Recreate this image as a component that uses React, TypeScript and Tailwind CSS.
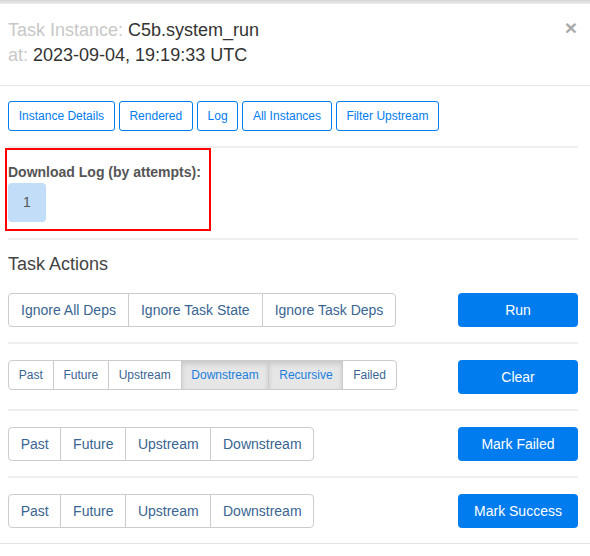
import React from 'react';

const navButtons = ['Instance Details', 'Rendered', 'Log', 'All Instances', 'Filter Upstream'];

type Seg = { label: string; active?: boolean };

const ButtonGroup = ({ items, small, tight }: { items: Seg[]; small?: boolean; tight?: boolean }) => (
  <div className="flex">
    {items.map((item, i) => (
      <button
        key={item.label}
        className={[
          'border border-[#cccccc]',
          small
            ? 'px-[9.8px] py-[5px] text-[12px] leading-[18px]'
            : tight
              ? 'px-[11.7px] py-[6px] text-[14px] leading-[20px]'
              : 'px-[12px] py-[6px] text-[14px] leading-[20px]',
          i > 0 ? '-ml-px' : '',
          i === 0 ? 'rounded-l-[4px]' : '',
          i === items.length - 1 ? 'rounded-r-[4px]' : '',
          item.active
            ? 'bg-[#e6e6e6] border-[#adadad] text-[#1a7fe0] shadow-[inset_0_3px_5px_rgba(0,0,0,0.125)] relative z-10'
            : 'bg-white text-[#396592]',
        ].join(' ')}
      >
        {item.label}
      </button>
    ))}
  </div>
);

const ActionButton = ({ label }: { label: string }) => (
  <button className="w-[120px] h-[34px] rounded-[4px] bg-[#017cee] text-white text-[14px] leading-[20px]">
    {label}
  </button>
);

const Hr = () => <div className="h-[2px] bg-[#eeeeee]" />;

const directions = [{ label: 'Past' }, { label: 'Future' }, { label: 'Upstream' }, { label: 'Downstream' }];

export default function App() {
  return (
    <div className="w-[590px] h-[556px] bg-white overflow-hidden" style={{ fontFamily: '"Liberation Sans", Arial, sans-serif' }}>
      {/* top strip */}
      <div className="h-[4px] bg-gradient-to-b from-[#d6d6d6] to-[#ececec]" />

      {/* Header */}
      <div className="flex justify-between pl-2 pr-[13px] pt-[14px] pb-[17px] border-b border-[#e5e5e5]">
        <div className="text-[18px] leading-[25px]">
          <div>
            <span className="text-[#c8c8c8]">Task Instance: </span>
            <span className="text-[#333333]">C5b.system_run</span>
          </div>
          <div>
            <span className="text-[#c8c8c8]">at: </span>
            <span className="text-[#333333]">2023-09-04, 19:19:33 UTC</span>
          </div>
        </div>
        <button className="text-[21px] font-bold leading-none text-[#aaaaaa] h-[20px] -mt-px">×</button>
      </div>

      {/* Body */}
      <div className="pl-2 pr-3 pb-[15px]">
        <div className="flex gap-[4px] mt-[15px]">
          {navButtons.map((b) => (
            <button
              key={b}
              className="h-[30px] px-[9.7px] border border-[#017cee] rounded-[3px] text-[12px] text-[#017cee] bg-white"
            >
              {b}
            </button>
          ))}
        </div>

        <div className="mt-[15px]">
          <Hr />
        </div>

        <div className="-ml-[3px] w-[206px] h-[83px] border-2 border-[#ff0000] pl-px pt-[12px]">
          <div className="text-[14px] leading-[20px] font-bold text-[#555555]">Download Log (by attempts):</div>
          <button className="mt-px w-[38px] h-[39px] rounded-[4px] bg-[#c2ddf8] text-[14px] text-[#555555]">1</button>
        </div>

        <div className="mt-[7px]">
          <Hr />
        </div>

        <div className="mt-[12px] text-[18px] leading-[25px] text-[#444444]">Task Actions</div>

        <div className="flex justify-between items-start mt-[16px] mb-[15px]">
          <ButtonGroup
            items={[{ label: 'Ignore All Deps' }, { label: 'Ignore Task State' }, { label: 'Ignore Task Deps' }]}
          />
          <ActionButton label="Run" />
        </div>
        <Hr />

        <div className="flex justify-between items-start mt-[16px] mb-[15px]">
          <ButtonGroup
            small
            items={[
              { label: 'Past' },
              { label: 'Future' },
              { label: 'Upstream' },
              { label: 'Downstream', active: true },
              { label: 'Recursive', active: true },
              { label: 'Failed' },
            ]}
          />
          <ActionButton label="Clear" />
        </div>
        <Hr />

        <div className="flex justify-between items-start mt-[16px] mb-[15px]">
          <ButtonGroup tight items={directions} />
          <ActionButton label="Mark Failed" />
        </div>
        <Hr />

        <div className="flex justify-between items-start mt-[16px]">
          <ButtonGroup tight items={directions} />
          <ActionButton label="Mark Success" />
        </div>
      </div>

      {/* Footer line */}
      <div className="border-t border-[#e5e5e5]" />
    </div>
  );
}
